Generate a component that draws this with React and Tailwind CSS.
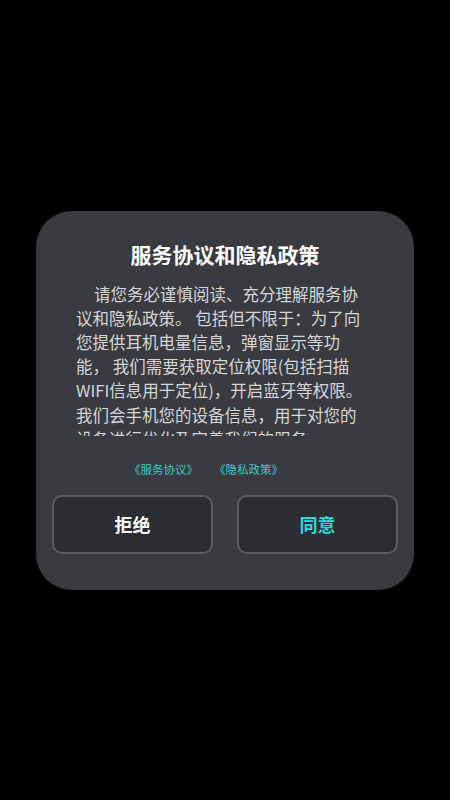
import React from 'react'

const FONT = { fontFamily: '"Noto Sans CJK SC", "Noto Sans", sans-serif' }

// Body text of the consent dialog; it is clipped by the scroll box below
const BODY =
  '请您务必谨慎阅读、充分理解服务协议和隐私政策。 包括但不限于：为了向您提供耳机电量信息，弹窗显示等功能， 我们需要获取定位权限(包括扫描WIFI信息用于定位)，开启蓝牙等权限。我们会手机您的设备信息，用于对您的设备进行优化及完善我们的服务。'

export default function App() {
  return (
    <div className="min-h-screen w-full bg-black flex items-center justify-center" style={FONT}>
      <div className="w-[378px] rounded-[36px] bg-[#3a3b40] pt-[29px] pb-[36px] flex flex-col">
        {/* Title */}
        <h1 className="text-center text-white font-bold text-[21px] leading-[28px]">
          服务协议和隐私政策
        </h1>

        <div className="mt-[14px] pl-10 pr-[46px] h-[154px] overflow-hidden">
          <p className="text-[16.5px] leading-[24.2px] text-[#d6d6d8] indent-[18px]">{BODY}</p>
        </div>

        {/* Links */}
        <div className="mt-[25px] flex justify-center gap-[16px] pr-[38px] text-[11.5px] leading-4 text-[#38c8cc]">
          <span>《服务协议》</span>
          <span>《隐私政策》</span>
        </div>

        {/* Actions */}
        <div className="mt-[18px] px-4 flex gap-6">
          <button className="flex-1 h-[59px] rounded-[10px] border-2 border-[#5b5c60] bg-[#2c2d32] text-white text-[18px] font-semibold">
            拒绝
          </button>
          <button className="flex-1 h-[59px] rounded-[10px] border-2 border-[#5b5c60] bg-[#2c2d32] text-[#2fd6d8] text-[18px] font-semibold">
            同意
          </button>
        </div>
      </div>
    </div>
  )
}
